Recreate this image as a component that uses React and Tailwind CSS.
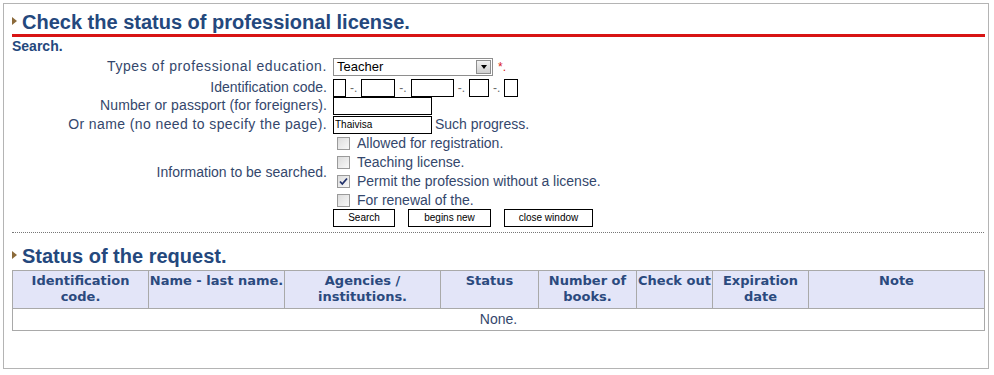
import React, { useState } from "react";

const Bullet = () => (
  <span className="inline-block w-0 h-0 border-y-[4px] border-y-transparent border-l-[5px] border-l-[#8b6a3a] mr-[5px] mb-[2px]" />
);

const Checkbox = ({ checked, onChange }) => (
  <span
    onClick={onChange}
    className="inline-flex items-center justify-center w-[13px] h-[13px] border border-[#9a9a9a] bg-gradient-to-br from-[#dcdcdc] to-[#f8f8f8] cursor-pointer"
  >
    {checked && (
      <svg width="9" height="9" viewBox="0 0 9 9">
        <path d="M1 4.5 L3.3 7 L8 1.5" stroke="#21316b" strokeWidth="1.8" fill="none" />
      </svg>
    )}
  </span>
);

const Box = ({ w, value = "" }) => (
  <input
    type="text"
    defaultValue={value}
    className={`${w} h-[18px] border border-black bg-white px-[1px] text-[10px] text-black outline-none`}
  />
);

const Sep = () => <span className="mx-[4px] text-[#6a6a6a] text-[12px]">-.</span>;

const App = () => {
  const [options, setOptions] = useState({
    register: false,
    teaching: false,
    permit: true,
    renewal: false,
  });

  const toggle = (key) => setOptions((prev) => ({ ...prev, [key]: !prev[key] }));

  const checks = [
    { key: "register", label: "Allowed for registration." },
    { key: "teaching", label: "Teaching license." },
    { key: "permit", label: "Permit the profession without a license." },
    { key: "renewal", label: "For renewal of the." },
  ];

  const columns = [
    { title: "Identification code.", w: "w-[136px]" },
    { title: "Name - last name.", w: "w-[136px]" },
    { title: "Agencies / institutions.", w: "w-[156px]" },
    { title: "Status", w: "w-[98px]" },
    { title: "Number of books.", w: "w-[98px]" },
    { title: "Check out", w: "w-[76px]" },
    { title: "Expiration date", w: "w-[96px]" },
    { title: "Note", w: "w-[176px]" },
  ];

  return (
    <div className="w-[994px] h-[375px] bg-white pt-[3px] pl-[3px] font-['Liberation_Sans',Arial,sans-serif] text-[14px] text-[#34476c]">
      <div className="w-[986px] h-[366px] border border-[#b4b4b4] pl-[8px] pr-[3px] pt-[6px]">
        {/* Header */}
        <h1 className="flex items-center text-[20px] leading-[24px] font-bold text-[#24487d]">
          <Bullet />
          Check the status of professional license.
        </h1>
        <div className="h-[3px] bg-[#d81414]" />
        <div className="font-bold text-[14px] leading-[16px] mt-[1px] text-[#24487d]">Search.</div>

        {/* Form */}
        <div className="mt-[3px] flex flex-col">
          <div className="flex items-center h-[19px]">
            <div className="w-[316px] text-right pr-[1px] tracking-[0.6px]">Types of professional education.</div>
            <div className="ml-[5px] w-[160px] h-[18px] border border-[#8e8e8e] bg-white flex items-center justify-between pl-[3px] pr-[1px]">
              <span className="text-[13px] text-black leading-none">Teacher</span>
              <span className="w-[15px] h-[14px] border border-[#8e8e8e] bg-gradient-to-b from-[#f2f2f2] to-[#cfcfcf] flex items-center justify-center">
                <span className="w-0 h-0 border-x-[3px] border-x-transparent border-t-[4px] border-t-black" />
              </span>
            </div>
            <span className="ml-[5px] text-[#d82020] text-[12px]">*.</span>
          </div>

          <div className="flex items-center h-[19px] mt-[2px]">
            <div className="w-[316px] text-right pr-[1px]">Identification code.</div>
            <div className="ml-[5px] flex items-center">
              <Box w="w-[13px]" />
              <Sep />
              <Box w="w-[34px]" />
              <Sep />
              <Box w="w-[43px]" />
              <Sep />
              <Box w="w-[20px]" />
              <Sep />
              <Box w="w-[14px]" />
            </div>
          </div>

          <div className="flex items-center h-[17px]">
            <div className="w-[316px] text-right pr-[1px] tracking-[0.1px]">Number or passport (for foreigners).</div>
            <div className="ml-[5px] flex">
              <Box w="w-[99px] h-[16px]" />
            </div>
          </div>

          <div className="flex items-center h-[19px] mt-[1px]">
            <div className="w-[316px] text-right pr-[1px] tracking-[0.4px]">Or name (no need to specify the page).</div>
            <div className="ml-[5px] flex items-center">
              <Box w="w-[99px]" value="Thaivisa" />
              <span className="ml-[3px]">Such progress.</span>
            </div>
          </div>

          <div className="flex items-center">
            <div className="w-[316px] text-right pr-[1px]">Information to be searched.</div>
            <div className="ml-[5px] flex flex-col">
              {checks.map((c) => (
                <label key={c.key} className="flex items-center h-[19px] pl-[4px]">
                  <Checkbox checked={options[c.key]} onChange={() => toggle(c.key)} />
                  <span className="ml-[7px]">{c.label}</span>
                </label>
              ))}
            </div>
          </div>

          <div className="flex items-center pl-[321px] gap-[13px] -mt-[1px]">
            <button className="w-[62px] h-[18px] border border-black bg-white text-[10px] text-black leading-none">
              Search
            </button>
            <button className="w-[83px] h-[18px] border border-black bg-white text-[10px] text-black leading-none">
              begins new
            </button>
            <button className="w-[89px] h-[18px] border border-black bg-white text-[10px] text-black leading-none">
              close window
            </button>
          </div>
        </div>

        <div className="mt-[5px] border-t border-dotted border-[#777] mr-[1px]" />

        {/* Status */}
        <h2 className="flex items-center text-[20px] leading-[24px] font-bold text-[#24487d] mt-[11px]">
          <Bullet />
          Status of the request.
        </h2>

        <table className="mt-[2px] w-[972px] border-collapse border border-[#a9a9a9] table-fixed">
          <thead>
            <tr className="bg-[#e3e5f8]">
              {columns.map((col) => (
                <th
                  key={col.title}
                  className={`${col.w} border border-[#a9a9a9] align-top text-center font-bold font-['DejaVu_Sans',Tahoma,sans-serif] text-[13px] leading-[16px] text-[#2b4a7e] pt-[2px] pb-[3px] px-0`}
                >
                  {col.title}
                </th>
              ))}
            </tr>
          </thead>
          <tbody>
            <tr>
              <td colSpan={8} className="h-[21px] text-center text-[14px] text-[#34476c] border border-[#a9a9a9]">
                None.
              </td>
            </tr>
          </tbody>
        </table>
      </div>
    </div>
  );
};

export default App;
